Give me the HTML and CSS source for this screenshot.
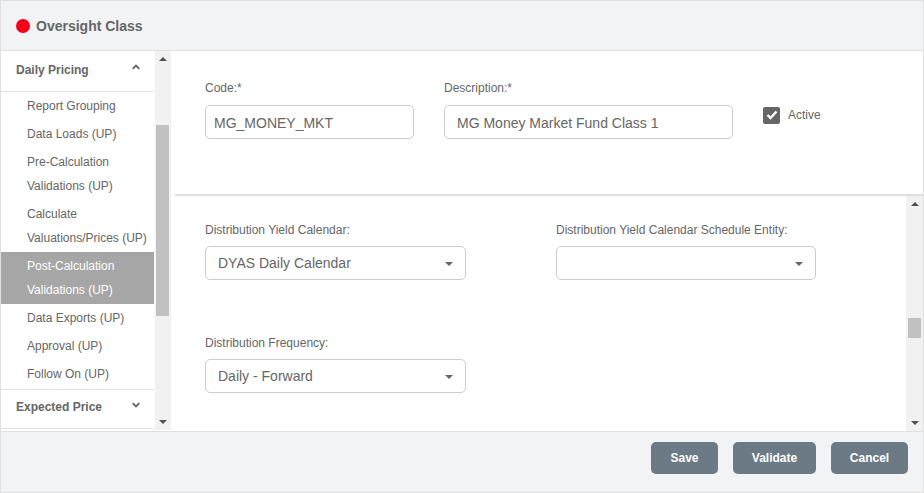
FILE: index.html
```html
<!DOCTYPE html>
<html lang="en">
<head>
    <meta charset="UTF-8">
    <title>Oversight Class</title>
    <link rel="stylesheet" href="styles.css">
</head>
<body>
    <div class="dialog">
        <header class="dialog-header">
            <span class="status-dot"></span>
            <h1>Oversight Class</h1>
        </header>
        <div class="dialog-body">
            <aside class="side">
                <nav class="menu">
                    <div class="group-title">
                        <span>Daily Pricing</span>
                        <svg class="chevron" width="8" height="6" viewBox="0 0 8 6"><path d="M0.7 4.8 L4 1.5 L7.3 4.8" fill="none" stroke="#666" stroke-width="1.8"/></svg>
                    </div>
                    <ul class="items">
                        <li>Report Grouping</li>
                        <li>Data Loads (UP)</li>
                        <li class="two-line">Pre-Calculation Validations (UP)</li>
                        <li class="two-line">Calculate Valuations/Prices (UP)</li>
                        <li class="two-line selected">Post-Calculation Validations (UP)</li>
                        <li>Data Exports (UP)</li>
                        <li>Approval (UP)</li>
                        <li>Follow On (UP)</li>
                    </ul>
                    <div class="group-title closed">
                        <span>Expected Price</span>
                        <svg class="chevron" width="8" height="6" viewBox="0 0 8 6"><path d="M0.7 1.2 L4 4.5 L7.3 1.2" fill="none" stroke="#666" stroke-width="1.8"/></svg>
                    </div>
                </nav>
                <div class="scrollbar side-scroll">
                    <span class="arrow up"></span>
                    <div class="track"><div class="thumb"></div></div>
                    <span class="arrow down"></span>
                </div>
            </aside>
            <main class="content">
                <section class="top-form">
                    <div class="field code">
                        <label>Code:*</label>
                        <input type="text" value="MG_MONEY_MKT">
                    </div>
                    <div class="field desc">
                        <label>Description:*</label>
                        <input type="text" value="MG Money Market Fund Class 1">
                    </div>
                    <div class="active">
                        <span class="checkbox">
                            <svg width="12" height="10" viewBox="0 0 12 10"><path d="M1.5 5 L4.5 8 L10.5 1.5" fill="none" stroke="#fff" stroke-width="2.4"/></svg>
                        </span>
                        <span>Active</span>
                    </div>
                </section>
                <section class="lower">
                    <div class="lower-form">
                        <div class="row">
                            <div class="field pick-left">
                                <label>Distribution Yield Calendar:</label>
                                <div class="select">DYAS Daily Calendar<span class="caret"></span></div>
                            </div>
                            <div class="field pick-right">
                                <label>Distribution Yield Calendar Schedule Entity:</label>
                                <div class="select"><span class="caret"></span></div>
                            </div>
                        </div>
                        <div class="row">
                            <div class="field pick-left">
                                <label>Distribution Frequency:</label>
                                <div class="select">Daily - Forward<span class="caret"></span></div>
                            </div>
                        </div>
                    </div>
                    <div class="scrollbar main-scroll">
                        <span class="arrow up"></span>
                        <div class="track"><div class="thumb"></div></div>
                        <span class="arrow down"></span>
                    </div>
                </section>
            </main>
        </div>
        <footer class="dialog-footer">
            <button class="save">Save</button>
            <button class="validate">Validate</button>
            <button class="cancel">Cancel</button>
        </footer>
    </div>
</body>
</html>
```

FILE: styles.css
```css
* {
    box-sizing: border-box;
}

html, body {
    margin: 0;
    height: 100%;
}

body {
    font-family: "Liberation Sans", Arial, sans-serif;
    font-size: 12px;
    color: #666;
    background-color: #fff;
}

.dialog {
    width: 924px;
    height: 493px;
    border: 1px solid #e0e0e0;
    display: flex;
    flex-direction: column;
    overflow: hidden;
}

.dialog-header {
    height: 50px;
    flex: none;
    display: flex;
    align-items: center;
    padding-left: 15px;
    background-color: #f1f3f5;
    border-bottom: 1px solid #e0e0e0;
}

.status-dot {
    width: 14px;
    height: 14px;
    border-radius: 50%;
    background-color: #f50018;
    margin-right: 6px;
}

h1 {
    margin: 0;
    font-size: 14px;
    font-weight: bold;
    color: #666;
}

.dialog-body {
    flex: 1;
    display: flex;
    min-height: 0;
}

.side {
    width: 174px;
    flex: none;
    display: flex;
}

.menu {
    width: 153px;
    flex: none;
    overflow: hidden;
}

.group-title {
    height: 41px;
    display: flex;
    align-items: center;
    justify-content: space-between;
    padding: 0 14px 3px 15px;
    font-weight: bold;
    border-bottom: 1px solid #e0e0e0;
}

.group-title.closed {
    height: 40px;
    margin-top: 1px;
    padding-bottom: 4px;
    border-top: 1px solid #e0e0e0;
}

.chevron {
    margin-top: -5px;
}

.items {
    list-style: none;
    margin: 0;
    padding: 0;
}

.items li {
    padding: 2px 5px 0 26px;
    line-height: 24px;
    height: 28px;
}

.items li.two-line {
    height: 52px;
}

.items li.selected {
    background-color: #a6a6a6;
    color: #fff;
}

.scrollbar {
    display: flex;
    flex-direction: column;
    align-items: center;
    background-color: #f1f1f1;
}

.side-scroll {
    width: 16px;
    margin-left: 1px;
    height: 379px;
}

.main-scroll {
    width: 17px;
    flex: none;
}

.arrow {
    width: 0;
    height: 0;
    flex: none;
    border-left: 4px solid transparent;
    border-right: 4px solid transparent;
}

.arrow.up {
    margin: 6px 0 5px;
    border-bottom: 4px solid #505050;
}

.arrow.down {
    margin: 5px 0 6px;
    border-top: 4px solid #505050;
}

.track {
    flex: 1;
    width: 100%;
    display: flex;
    flex-direction: column;
}

.thumb {
    background-color: #c1c1c1;
    margin: 0 2px 0 1px;
}

.side-scroll .thumb {
    height: 191px;
    margin-top: 59px;
}

.main-scroll .thumb {
    height: 20px;
    margin: 107px 2px 0;
}

.content {
    flex: 1;
    display: flex;
    flex-direction: column;
    min-width: 0;
}

.top-form {
    height: 145px;
    flex: none;
    display: flex;
    padding: 30px 0 0 30px;
    border-bottom: 2px solid #e0e0e0;
}

.field label {
    display: block;
    height: 14px;
    line-height: 14px;
    margin-bottom: 10px;
}

.lower .field label {
    margin-bottom: 9px;
}

.field.code {
    width: 209px;
    margin-right: 30px;
}

.field.desc {
    width: 289px;
    margin-right: 30px;
}

input[type="text"], .select {
    display: block;
    width: 100%;
    height: 34px;
    border: 1px solid #ccc;
    border-radius: 5px;
    font-family: inherit;
    font-size: 14px;
    color: #666;
    background-color: #fff;
}

input[type="text"] {
    padding: 2px 8px 0;
}

.field.desc input {
    padding: 2px 12px 0;
}

.active {
    display: flex;
    align-items: center;
    gap: 8px;
    height: 18px;
    margin-top: 25px;
}

.checkbox {
    width: 17px;
    height: 17px;
    border-radius: 2px;
    background-color: #666;
    display: flex;
    align-items: center;
    justify-content: center;
}

.lower {
    flex: 1;
    display: flex;
    min-height: 0;
}

.lower-form {
    flex: 1;
    padding: 27px 0 0 30px;
}

.row {
    display: flex;
    height: 113px;
}

.pick-left {
    width: 261px;
    margin-right: 90px;
}

.pick-right {
    width: 260px;
}

.select {
    position: relative;
    line-height: 32px;
    padding-left: 12px;
}

.caret {
    position: absolute;
    right: 12px;
    top: 15px;
    width: 0;
    height: 0;
    border-left: 4px solid transparent;
    border-right: 4px solid transparent;
    border-top: 4px solid #666;
}

.dialog-footer {
    height: 61px;
    flex: none;
    display: flex;
    justify-content: flex-end;
    gap: 15px;
    padding: 10px 15px 0 0;
    background-color: #f1f3f5;
    border-top: 1px solid #e0e0e0;
}

button {
    height: 32px;
    border: none;
    border-radius: 5px;
    background-color: #6c7a85;
    color: #fff;
    font-family: inherit;
    font-size: 12px;
    font-weight: bold;
    cursor: pointer;
}

.save {
    width: 67px;
}

.validate {
    width: 83px;
}

.cancel {
    width: 77px;
}
```
